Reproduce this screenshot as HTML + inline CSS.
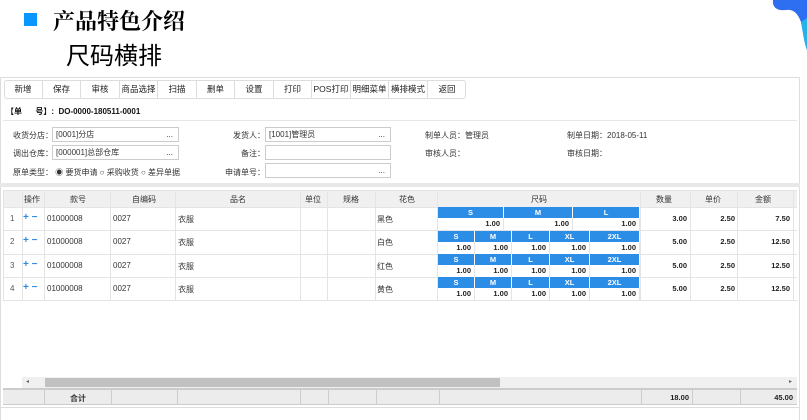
<!DOCTYPE html>
<html><head><meta charset="utf-8"><style>
*{margin:0;padding:0;box-sizing:border-box}
body{width:807px;height:420px;background:#fff;position:relative;overflow:hidden;font-family:"Liberation Sans","Noto Sans CJK SC",sans-serif;font-size:8px;color:#333}
.a{position:absolute}
.btn{position:absolute;top:81px;height:17px;border-right:1px solid #ddd;text-align:center;line-height:17px;font-size:8.5px;color:#222}
.lbl{position:absolute;font-size:8px;color:#333;white-space:nowrap}
.inp{position:absolute;height:15px;border:1px solid #ccc;background:#fff;font-size:8px;line-height:13px;padding-left:3px}
.inp span{position:absolute;right:5px;top:0}
.v{position:absolute;top:190px;height:110px;border-left:1px solid #e4e4e4}
.h{position:absolute;left:3px;width:794px;border-top:1px solid #e4e4e4}
.c{position:absolute;font-size:8px;white-space:nowrap}
.sz{position:absolute;background:#2b8de6;color:#fff;font-weight:bold;text-align:center;height:11px;line-height:11px;font-size:7.5px;border-right:1px solid #fff}
.sv{position:absolute;background:#fff;text-align:right;padding-right:3px;height:12px;line-height:12px;font-size:7.5px;font-weight:bold;color:#222;border-right:1px solid #e4e4e4}
.n{position:absolute;font-weight:bold;font-size:7.5px;text-align:right;color:#222}
</style></head><body>
<div class="a" style="left:24px;top:13px;width:13px;height:13px;background:#0a96ff"></div>
<div class="a" style="left:53px;top:5px;font-size:22px;font-weight:bold;color:#000;font-family:'Liberation Serif','Noto Serif CJK SC',serif">产品特色介绍</div>
<div class="a" style="left:66px;top:36px;font-size:24px;color:#000">尺码横排</div>
<svg class="a" style="left:770px;top:0" width="37" height="50"><path d="M3 0 C2 8 8 11 16 10 C24 9 28 14 31 22 C33 32 34 42 37 50 L37 0 Z" fill="#2e6ef0"/><path d="M31 22 C33 32 34 42 37 50 L37 18 Z" fill="#25b2e8"/></svg>
<div class="a" style="left:0;top:77px;width:800px;height:343px;border:1px solid #ddd;border-bottom:none"></div>
<div class="a" style="left:4px;top:80px;width:462px;height:19px;border:1px solid #ddd;border-radius:3px"></div>
<div class="btn" style="left:4px;width:39px">新增</div><div class="btn" style="left:43px;width:38px">保存</div><div class="btn" style="left:81px;width:39px">审核</div><div class="btn" style="left:120px;width:38px">商品选择</div><div class="btn" style="left:158px;width:39px">扫描</div><div class="btn" style="left:197px;width:38px">删单</div><div class="btn" style="left:235px;width:39px">设置</div><div class="btn" style="left:274px;width:38px">打印</div><div class="btn" style="left:312px;width:39px">POS打印</div><div class="btn" style="left:351px;width:38px">明细菜单</div><div class="btn" style="left:389px;width:39px">横排模式</div><div class="btn" style="left:428px;width:38px;border:none">返回</div>
<div class="a" style="left:6px;top:106px;font-size:8px;font-weight:bold;color:#111">【单&nbsp;&nbsp;&nbsp;&nbsp;&nbsp;&nbsp;号】:&nbsp;&nbsp;DO-0000-180511-0001</div>
<div class="a" style="left:3px;top:120px;width:794px;border-top:1px solid #e6e6e6"></div>
<div class="lbl" style="left:13px;top:130px">收货分店：</div><div class="inp" style="left:52px;top:127px;width:127px">[0001]分店<span>...</span></div>
<div class="lbl" style="left:13px;top:148px">调出仓库：</div><div class="inp" style="left:52px;top:145px;width:127px">[000001]总部仓库<span>...</span></div>
<div class="lbl" style="left:13px;top:167px">原单类型：&nbsp;◉ 要货申请 ○ 采购收货 ○ 差异单据</div>
<div class="lbl" style="left:233px;top:130px">发货人：</div><div class="inp" style="left:265px;top:127px;width:126px">[1001]管理员<span>...</span></div>
<div class="lbl" style="left:241px;top:148px">备注：</div><div class="inp" style="left:265px;top:145px;width:126px"></div>
<div class="lbl" style="left:225px;top:167px">申请单号：</div><div class="inp" style="left:265px;top:163px;width:126px"><span>...</span></div>
<div class="lbl" style="left:425px;top:130px">制单人员：管理员</div><div class="lbl" style="left:567px;top:130px">制单日期：2018-05-11</div>
<div class="lbl" style="left:425px;top:148px">审核人员：</div><div class="lbl" style="left:567px;top:148px">审核日期：</div>
<div class="a" style="left:0;top:183px;width:800px;height:4px;background:#e8e8e8"></div>
<div class="a" style="left:3px;top:190px;width:794px;height:17px;background:#f0f0f0"></div>
<div class="h" style="top:190px"></div><div class="h" style="top:207px"></div><div class="h" style="top:230px"></div><div class="h" style="top:254px"></div><div class="h" style="top:277px"></div><div class="h" style="top:300px"></div>
<div class="v" style="left:3px"></div><div class="v" style="left:22px"></div><div class="v" style="left:44px"></div><div class="v" style="left:110px"></div><div class="v" style="left:175px"></div><div class="v" style="left:300px"></div><div class="v" style="left:327px"></div><div class="v" style="left:375px"></div><div class="v" style="left:437px"></div><div class="v" style="left:640px"></div><div class="v" style="left:690px"></div><div class="v" style="left:737px"></div><div class="v" style="left:793px"></div>
<div class="c" style="left:24px;top:194px">操作</div><div class="c" style="left:70px;top:194px">款号</div><div class="c" style="left:132px;top:194px">自编码</div><div class="c" style="left:230px;top:194px">品名</div><div class="c" style="left:305px;top:194px">单位</div><div class="c" style="left:343px;top:194px">规格</div><div class="c" style="left:399px;top:194px">花色</div><div class="c" style="left:531px;top:194px">尺码</div><div class="c" style="left:656px;top:194px">数量</div><div class="c" style="left:705px;top:194px">单价</div><div class="c" style="left:755px;top:194px">金额</div>
<div class="c" style="left:10px;top:214px;color:#555">1</div><div class="c" style="left:10px;top:237px;color:#555">2</div><div class="c" style="left:10px;top:261px;color:#555">3</div><div class="c" style="left:10px;top:284px;color:#555">4</div>
<div class="c" style="left:23px;top:212px;color:#2b8de6;font-weight:bold;font-size:10px">+ −</div><div class="c" style="left:23px;top:235px;color:#2b8de6;font-weight:bold;font-size:10px">+ −</div><div class="c" style="left:23px;top:259px;color:#2b8de6;font-weight:bold;font-size:10px">+ −</div><div class="c" style="left:23px;top:282px;color:#2b8de6;font-weight:bold;font-size:10px">+ −</div>
<div class="c" style="left:47px;top:214px">01000008</div><div class="c" style="left:47px;top:237px">01000008</div><div class="c" style="left:47px;top:261px">01000008</div><div class="c" style="left:47px;top:284px">01000008</div>
<div class="c" style="left:113px;top:214px">0027</div><div class="c" style="left:113px;top:237px">0027</div><div class="c" style="left:113px;top:261px">0027</div><div class="c" style="left:113px;top:284px">0027</div>
<div class="c" style="left:178px;top:214px">衣服</div><div class="c" style="left:178px;top:237px">衣服</div><div class="c" style="left:178px;top:261px">衣服</div><div class="c" style="left:178px;top:284px">衣服</div>
<div class="c" style="left:377px;top:214px">黑色</div><div class="c" style="left:377px;top:237px">白色</div><div class="c" style="left:377px;top:261px">红色</div><div class="c" style="left:377px;top:284px">黄色</div>
<div class="sz" style="left:438px;top:207px;width:66px">S</div><div class="sz" style="left:504px;top:207px;width:69px">M</div><div class="sz" style="left:573px;top:207px;width:67px">L</div>
<div class="sv" style="left:438px;top:218px;width:66px">1.00</div><div class="sv" style="left:504px;top:218px;width:69px">1.00</div><div class="sv" style="left:573px;top:218px;width:67px">1.00</div>
<div class="sz" style="left:438px;top:231px;width:37px">S</div><div class="sz" style="left:475px;top:231px;width:37px">M</div><div class="sz" style="left:512px;top:231px;width:38px">L</div><div class="sz" style="left:550px;top:231px;width:40px">XL</div><div class="sz" style="left:590px;top:231px;width:50px">2XL</div>
<div class="sv" style="left:438px;top:242px;width:37px">1.00</div><div class="sv" style="left:475px;top:242px;width:37px">1.00</div><div class="sv" style="left:512px;top:242px;width:38px">1.00</div><div class="sv" style="left:550px;top:242px;width:40px">1.00</div><div class="sv" style="left:590px;top:242px;width:50px">1.00</div>
<div class="sz" style="left:438px;top:254px;width:37px">S</div><div class="sz" style="left:475px;top:254px;width:37px">M</div><div class="sz" style="left:512px;top:254px;width:38px">L</div><div class="sz" style="left:550px;top:254px;width:40px">XL</div><div class="sz" style="left:590px;top:254px;width:50px">2XL</div>
<div class="sv" style="left:438px;top:265px;width:37px">1.00</div><div class="sv" style="left:475px;top:265px;width:37px">1.00</div><div class="sv" style="left:512px;top:265px;width:38px">1.00</div><div class="sv" style="left:550px;top:265px;width:40px">1.00</div><div class="sv" style="left:590px;top:265px;width:50px">1.00</div>
<div class="sz" style="left:438px;top:277px;width:37px">S</div><div class="sz" style="left:475px;top:277px;width:37px">M</div><div class="sz" style="left:512px;top:277px;width:38px">L</div><div class="sz" style="left:550px;top:277px;width:40px">XL</div><div class="sz" style="left:590px;top:277px;width:50px">2XL</div>
<div class="sv" style="left:438px;top:288px;width:37px">1.00</div><div class="sv" style="left:475px;top:288px;width:37px">1.00</div><div class="sv" style="left:512px;top:288px;width:38px">1.00</div><div class="sv" style="left:550px;top:288px;width:40px">1.00</div><div class="sv" style="left:590px;top:288px;width:50px">1.00</div>
<div class="n" style="left:640px;width:47px;top:214px">3.00</div><div class="n" style="left:690px;width:45px;top:214px">2.50</div><div class="n" style="left:737px;width:53px;top:214px">7.50</div>
<div class="n" style="left:640px;width:47px;top:237px">5.00</div><div class="n" style="left:690px;width:45px;top:237px">2.50</div><div class="n" style="left:737px;width:53px;top:237px">12.50</div>
<div class="n" style="left:640px;width:47px;top:261px">5.00</div><div class="n" style="left:690px;width:45px;top:261px">2.50</div><div class="n" style="left:737px;width:53px;top:261px">12.50</div>
<div class="n" style="left:640px;width:47px;top:284px">5.00</div><div class="n" style="left:690px;width:45px;top:284px">2.50</div><div class="n" style="left:737px;width:53px;top:284px">12.50</div>
<div class="a" style="left:22px;top:377px;width:775px;height:11px;background:#f0f0f0"></div>
<div class="a" style="left:45px;top:378px;width:455px;height:9px;background:#c1c1c1"></div>
<div class="a" style="left:26px;top:378px;font-size:6px;color:#666">◂</div><div class="a" style="left:789px;top:378px;font-size:6px;color:#666">▸</div>
<div class="a" style="left:3px;top:388px;width:794px;height:17px;background:#ececec;border-top:2px solid #ccc;border-bottom:1px solid #ccc"></div>
<div class="a" style="left:44px;top:390px;height:15px;border-left:1px solid #ccc"></div><div class="a" style="left:111px;top:390px;height:15px;border-left:1px solid #ccc"></div><div class="a" style="left:177px;top:390px;height:15px;border-left:1px solid #ccc"></div><div class="a" style="left:300px;top:390px;height:15px;border-left:1px solid #ccc"></div><div class="a" style="left:328px;top:390px;height:15px;border-left:1px solid #ccc"></div><div class="a" style="left:376px;top:390px;height:15px;border-left:1px solid #ccc"></div><div class="a" style="left:439px;top:390px;height:15px;border-left:1px solid #ccc"></div><div class="a" style="left:641px;top:390px;height:15px;border-left:1px solid #ccc"></div><div class="a" style="left:692px;top:390px;height:15px;border-left:1px solid #ccc"></div><div class="a" style="left:740px;top:390px;height:15px;border-left:1px solid #ccc"></div>
<div class="c" style="left:70px;top:393px;font-weight:bold">合计</div>
<div class="n" style="left:641px;width:48px;top:393px">18.00</div><div class="n" style="left:740px;width:53px;top:393px">45.00</div>
<div class="a" style="left:0;top:407px;width:800px;border-top:1px solid #ddd"></div>
</body></html>
